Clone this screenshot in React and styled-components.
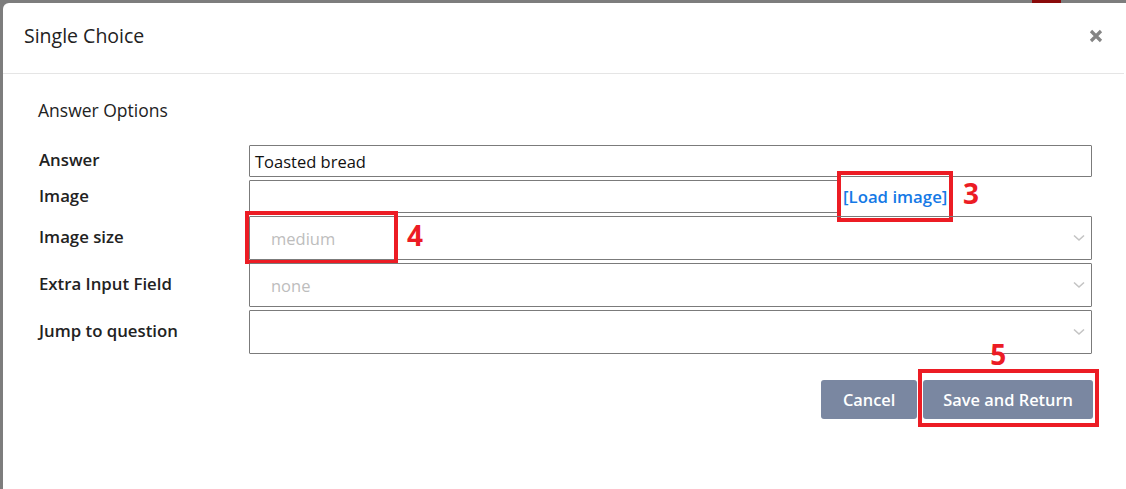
import React from "react";
import styled, { createGlobalStyle } from "styled-components";

const GlobalStyle = createGlobalStyle`
  html, body {
    margin: 0;
    padding: 0;
    background: #7d7d7d;
    font-family: "Open Sans", "Liberation Sans", sans-serif;
    overflow: hidden;
  }
`;

const Backdrop = styled.div`
  position: relative;
  width: 1126px;
  height: 489px;
  padding: 3px 0 0 3px;
  box-sizing: border-box;
  overflow: hidden;
`;

const BehindTab = styled.div`
  position: absolute;
  top: 0;
  left: 1032px;
  width: 29px;
  height: 3px;
  background: #8a0a0a;
`;

const Modal = styled.div`
  width: 1140px;
  height: 100%;
  background: #fff;
  border-top-left-radius: 6px;
  display: flex;
  flex-direction: column;
`;

const Header = styled.div`
  height: 70px;
  display: flex;
  align-items: center;
  justify-content: space-between;
  padding: 0 0 0 21px;
  width: 1100px;
  border-bottom: 1px solid #e5e5e5;
  box-sizing: content-box;
`;

const Title = styled.h4`
  margin: -5px 0 0 0;
  font-size: 19.5px;
  font-weight: 400;
  color: #222;
`;

const Close = styled.button`
  border: none;
  background: none;
  padding: 0;
  width: 14px;
  height: 14px;
  margin-right: 21px;
  margin-top: -4px;
  cursor: pointer;
  display: flex;
`;

const Body = styled.div`
  width: 1055px;
  padding: 24px 0 0 35px;
`;

const SectionTitle = styled.div`
  font-size: 17.5px;
  color: #222;
  margin-bottom: 23px;
`;

const Form = styled.div`
  display: grid;
  grid-template-columns: 210px 843px;
  row-gap: 3px;
  align-items: center;
  padding-left: 1px;
`;

const Label = styled.label`
  font-size: 16.8px;
  font-weight: 600;
  color: #222;
  margin-top: -3px;
`;

const TextInput = styled.div`
  height: ${(p) => p.h || 32}px;
  box-sizing: border-box;
  border: 1px solid #7b7b7b;
  border-radius: 1px;
  padding: 0 5px;
  display: flex;
  align-items: center;
  font-size: 16.5px;
  color: #111;
  width: ${(p) => p.width || "100%"};
`;

const ImageRow = styled.div`
  display: flex;
  align-items: center;
`;

const Marked = styled.span`
  position: relative;
  display: inline-flex;
`;

const RedBox = styled.span`
  position: absolute;
  border: 4px solid #ec1c24;
  top: ${(p) => p.t}px;
  left: ${(p) => p.l}px;
  right: ${(p) => p.r}px;
  bottom: ${(p) => p.b}px;
  pointer-events: none;
`;

const Num = styled.span`
  position: absolute;
  color: #ec1c24;
  font-size: 28px;
  font-weight: 700;
  line-height: 1;
  top: ${(p) => p.t}px;
  left: ${(p) => p.l}px;
`;

const LoadLink = styled.a`
  color: #1479e6;
  font-size: 16.8px;
  font-weight: 600;
  text-decoration: none;
  padding: 0 2px 0 4px;
  cursor: pointer;
`;

const Select = styled.div`
  position: relative;
  height: 44px;
  box-sizing: border-box;
  border: 1px solid #7b7b7b;
  border-radius: 1px;
  display: flex;
  align-items: center;
  padding-left: 21px;
  font-size: 16.5px;
  color: #bdbdbd;
`;

const Chevron = styled.svg`
  position: absolute;
  right: 6px;
  top: 50%;
  margin-top: -4px;
`;

const Footer = styled.div`
  display: flex;
  justify-content: flex-end;
  gap: 6px;
  margin-top: 26px;
`;

const Button = styled.button`
  height: 39px;
  border: none;
  border-radius: 3px;
  background: #7a87a1;
  color: #fff;
  font-family: inherit;
  font-size: 16.4px;
  font-weight: 600;
  padding: 0 ${(p) => p.pad || 20}px;
  cursor: pointer;
`;

const Arrow = () => (
  <Chevron width="12" height="8" viewBox="0 0 12 8">
    <path d="M1 1.5 L6 6 L11 1.5" fill="none" stroke="#c4c4c4" strokeWidth="1.6" />
  </Chevron>
);

export default function App() {
  return (
    <>
      <GlobalStyle />
      <Backdrop>
        <BehindTab />
        <Modal>
          <Header>
            <Title>Single Choice</Title>
            <Close aria-label="Close">
              <svg width="14" height="14" viewBox="0 0 14 14">
                <path d="M2 2 L12 12 M12 2 L2 12" stroke="#858585" strokeWidth="3.2" />
              </svg>
            </Close>
          </Header>
          <Body>
            <SectionTitle>Answer Options</SectionTitle>
            <Form>
              <Label>Answer</Label>
              <TextInput>Toasted bread</TextInput>

              <Label>Image</Label>
              <ImageRow>
                <TextInput width="590px" h={33} />
                <Marked>
                  <LoadLink>[Load image]</LoadLink>
                  <RedBox t={-14} l={-2} r={-4} b={-14} />
                  <Num t={-6} l={124}>3</Num>
                </Marked>
              </ImageRow>

              <Label>Image size</Label>
              <Select>
                <Marked>
                  medium
                  <RedBox t={-16} l={-26} r={-63} b={-14} />
                  <Num t={-6} l={136}>4</Num>
                </Marked>
                <Arrow />
              </Select>

              <Label>Extra Input Field</Label>
              <Select>
                none
                <Arrow />
              </Select>

              <Label>Jump to question</Label>
              <Select>
                <Arrow />
              </Select>
            </Form>
            <Footer>
              <Button pad={22}>Cancel</Button>
              <Marked>
                <Button>Save and Return</Button>
                <RedBox t={-11} l={-5} r={-6} b={-8} />
                <Num t={-40} l={67}>5</Num>
              </Marked>
            </Footer>
          </Body>
        </Modal>
      </Backdrop>
    </>
  );
}
